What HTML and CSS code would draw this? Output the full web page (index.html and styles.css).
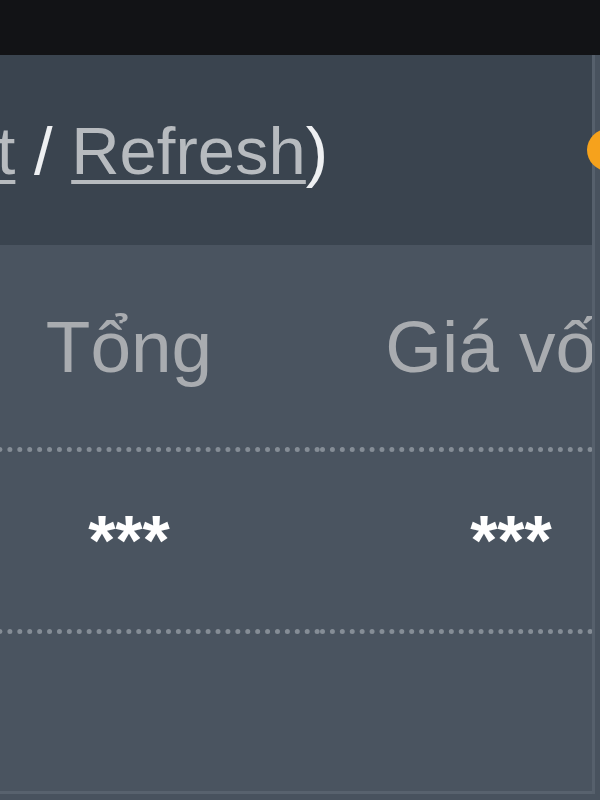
FILE: index.html
```html
<!DOCTYPE html>
<html lang="vi">
<head>
    <meta charset="UTF-8">
    <meta name="viewport" content="width=device-width, initial-scale=1.0">
    <title>Tổng quan</title>
    <link rel="stylesheet" href="styles.css">
</head>
<body>
    <div class="topbar"></div>
    <div class="panel">
        <div class="toolbar">
            <span class="actions">(<a href="#">Reset</a> / <a href="#">Refresh</a>)</span>
            <span class="status-dot"></span>
        </div>
        <div class="grid-wrap">
            <table class="summary">
                <tr>
                    <th>Tổng</th>
                    <th>Giá vốn</th>
                </tr>
                <tr class="values">
                    <td>***</td>
                    <td>***</td>
                </tr>
                <tr class="spare">
                    <td></td>
                    <td></td>
                </tr>
            </table>
        </div>
    </div>
</body>
</html>
```

FILE: styles.css
```css
body {
    margin: 0;
    padding: 0;
    width: 600px;
    height: 800px;
    overflow: hidden;
    background-color: #48525e;
    font-family: 'Liberation Sans', Arial, sans-serif;
}
.topbar {
    height: 55px;
    background-color: #121316;
}
.panel {
    width: 595px;
    box-sizing: border-box;
    border-right: 3px solid #56606c;
}
.toolbar {
    height: 190px;
    display: flex;
    align-items: center;
    justify-content: space-between;
    background-color: #3a444f;
    color: #eef0f2;
    font-size: 67px;
    white-space: nowrap;
}
.actions {
    margin-left: -182px;
}
.actions a {
    color: #b7bbbf;
    text-decoration: underline;
    text-decoration-thickness: 4px;
    text-underline-offset: 6px;
}
.status-dot {
    width: 42px;
    height: 42px;
    margin-right: -37px;
    border-radius: 50%;
    background-color: #f6a21c;
    flex-shrink: 0;
}
.grid-wrap {
    overflow: hidden;
    background-color: #4a5460;
}
.summary {
    margin-left: -62px;
    width: 764px;
    border-collapse: collapse;
    table-layout: fixed;
}
.summary th, .summary td {
    width: 382px;
    padding: 0;
    text-align: center;
    vertical-align: middle;
    border-bottom: 5px dotted #858d96;
}
.summary th {
    height: 202px;
    font-size: 73px;
    font-weight: normal;
    color: #a9acb0;
}
.values td {
    height: 177px;
    font-size: 70px;
    font-weight: bold;
    color: #ffffff;
}
.spare td {
    height: 157px;
    border-bottom: 3px solid #58626e;
}
```
